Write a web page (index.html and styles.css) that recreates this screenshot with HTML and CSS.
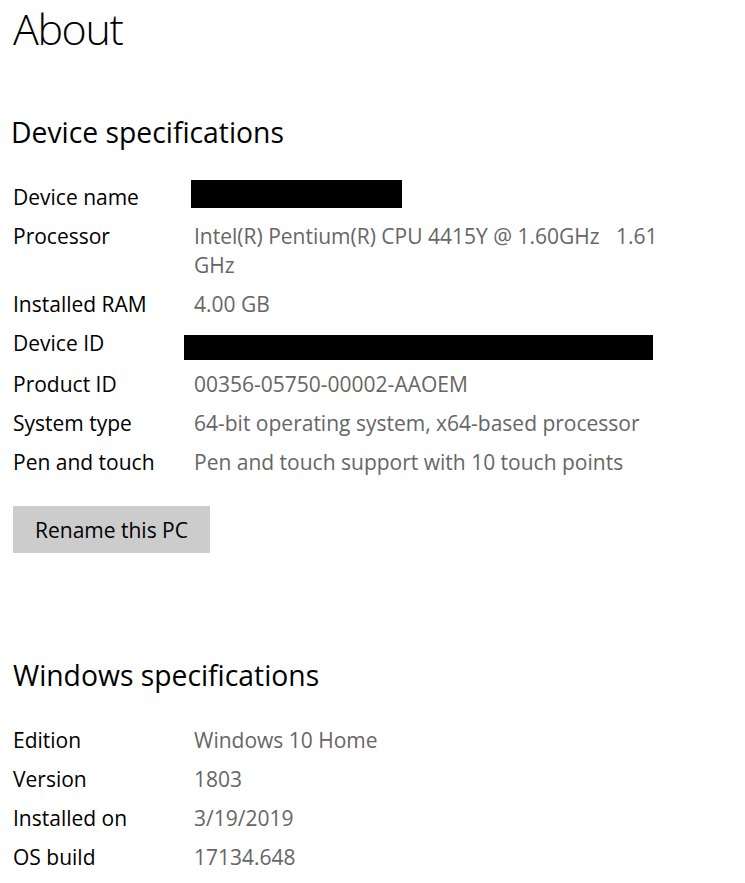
FILE: index.html
```html
<!DOCTYPE html>
<html lang="en">
<head>
<meta charset="utf-8">
<title>About</title>
<link rel="stylesheet" href="styles.css">
</head>
<body>
<main class="page">
  <h1 class="title">About</h1>

  <section class="section device">
    <h2 class="subtitle">Device specifications</h2>
    <dl class="specs">
      <dt>Device name</dt>
      <dd><span class="redact redact-name"></span></dd>
      <dt>Processor</dt>
      <dd class="wrap">Intel(R) Pentium(R) CPU 4415Y @ 1.60GHz&nbsp;&nbsp; 1.61 GHz</dd>
      <dt>Installed RAM</dt>
      <dd>4.00 GB</dd>
      <dt>Device ID</dt>
      <dd><span class="redact redact-id"></span></dd>
      <dt>Product ID</dt>
      <dd>00356-05750-00002-AAOEM</dd>
      <dt>System type</dt>
      <dd>64-bit operating system, x64-based processor</dd>
      <dt>Pen and touch</dt>
      <dd>Pen and touch support with 10 touch points</dd>
    </dl>
    <button class="btn" type="button">Rename this PC</button>
  </section>

  <section class="section windows">
    <h2 class="subtitle">Windows specifications</h2>
    <dl class="specs">
      <dt>Edition</dt>
      <dd>Windows 10 Home</dd>
      <dt>Version</dt>
      <dd>1803</dd>
      <dt>Installed on</dt>
      <dd>3/19/2019</dd>
      <dt>OS build</dt>
      <dd>17134.648</dd>
    </dl>
  </section>
</main>
</body>
</html>
```

FILE: styles.css
```css
html, body {
  margin: 0;
  padding: 0;
  background: #ffffff;
}

body {
  font-family: "Open Sans", "Noto Sans", "Liberation Sans", sans-serif;
  color: #000;
}

.page {
  padding: 0 0 0 13px;
}

.title {
  margin: 0;
  font-size: 43px;
  font-weight: 300;
  line-height: 58px;
  letter-spacing: -1.4px;
}

.subtitle {
  margin: 0;
  font-size: 28.3px;
  font-weight: 400;
  line-height: 36px;
  letter-spacing: 0;
}

.device .subtitle {
  margin-top: 56px;
  margin-left: -2px;
}

.specs {
  display: grid;
  grid-template-columns: 181px 475px;
  row-gap: 10px;
  margin: 0;
  font-size: 21px;
  line-height: 29px;
}

.device .specs {
  margin-top: 33px;
}

.specs dt {
  margin: 0;
  color: #000;
}

.specs dd {
  margin: 0;
  color: #666666;
}

.redact {
  display: block;
  background: #000;
}

.redact-name {
  width: 211px;
  height: 28px;
  margin-left: -3px;
  margin-top: -3px;
}

.redact-id {
  width: 469px;
  height: 25px;
  margin-left: -10px;
  margin-top: 6px;
}

.btn {
  display: block;
  margin-top: 29px;
  width: 197px;
  height: 47px;
  padding: 0;
  border: none;
  background: #cccccc;
  color: #000;
  font-family: inherit;
  font-size: 21px;
}

.windows {
  margin-top: 104px;
}

.windows .specs {
  margin-top: 33px;
}
```
